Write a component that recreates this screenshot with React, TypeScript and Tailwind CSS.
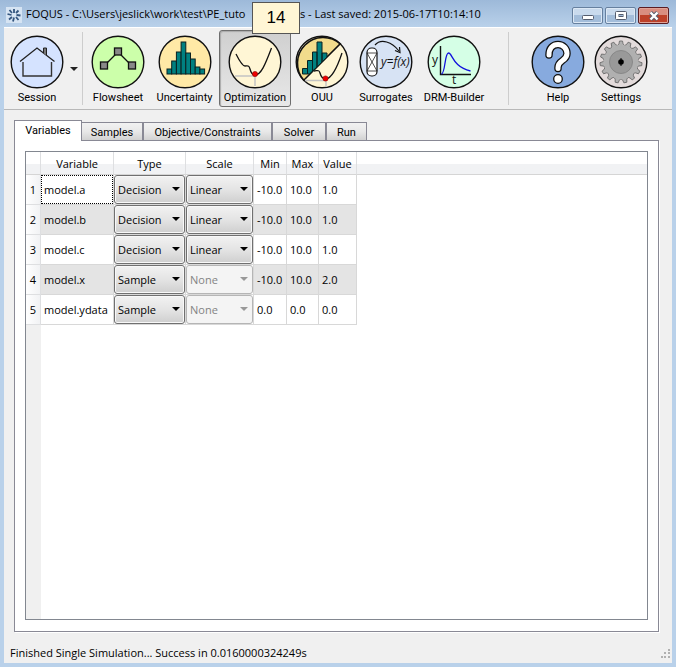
import type { ReactNode } from "react";

const outline = { stroke: "#111", strokeWidth: 1.4 };

function Disc({ fill, children }: { fill: string; children?: ReactNode }) {
  return (
    <svg viewBox="0 0 54 54" className="block h-[54px] w-[54px] shrink-0" fill="none" aria-hidden="true">
      <circle cx="27" cy="27" r="25.8" fill={fill} {...outline} />
      {children}
    </svg>
  );
}

const SessionIcon = () => (
  <Disc fill="#d5e3ff">
    <path d="M10 26.5 27 13l17.500 13.500" stroke="#222" strokeWidth="1.300" />
    <path d="M13 27v14h28.500V27" stroke="#333" strokeWidth="1.400" />
    <path d="M33.500 18v-5h3v7.500" fill="#777" stroke="#222" />
  </Disc>
);

const FlowsheetIcon = () => (
  <Disc fill="#ccffaa">
    <path d="M13 31 27 17l14 14" stroke="#111" strokeWidth="1.300" />
    <g fill="#888" stroke="#111" strokeWidth="1.300">
      <rect x="23.500" y="13" width="7" height="7" />
      <rect x="9.500" y="27" width="7" height="7" />
      <rect x="37.500" y="27" width="7" height="7" />
    </g>
  </Disc>
);

const bars = [
  [9, 5], [13.7, 13], [18.400, 22], [23.100, 32], [27.800, 21], [32.500, 15], [37.200, 7], [41.900, 5],
];

const UncertaintyIcon = () => (
  <Disc fill="#ffe9a6">
    <g fill="#008080" stroke="#0a2020" strokeWidth="1">
      {bars.map(([x, h]) => (
        <rect key={x} x={x} y={39 - h} width="4.700" height={h} />
      ))}
    </g>
  </Disc>
);

const OptimizationIcon = () => (
  <Disc fill="#fff6d5">
    <path d="M7 41h20v10" stroke="#c4c4c4" strokeWidth="1.500" />
    <path d="M8 19c3 6 6 12 9 12s4-1 5 3 2 6 5 6c6 0 10-10 16.500-27" stroke="#111" strokeWidth="1.300" />
    <circle cx="27" cy="39" r="2.600" fill="#e00" stroke="#800" strokeWidth=".6" />
  </Disc>
);

const OuuIcon = () => (
  <Disc fill="#fff6d5">
    <path d="M8.800 45.200A25.800 25.800 0 0 1 45.200 8.800Z" fill="#f2dc8c" stroke="#111" strokeWidth="1.600" />
    <g fill="#008080" stroke="#0a2020" strokeWidth="1">
      <path d="M7.500 33.500h5V39h-5zM12.500 25.500h5V36l-3 3h-2zM17.500 17h4.500v15l-4.500 4zM22 7h5v20l-5 5zM27 18h5v4l-5 5z" />
    </g>
    <path d="M10 45.500h21V52" stroke="#c4c4c4" strokeWidth="1.400" />
    <path d="M19 36c3 0 5-2 6 2s3 6 6 6c7-1 12-14 16-26" stroke="#111" strokeWidth="1.300" />
    <circle cx="30.500" cy="43.500" r="2.600" fill="#e00" stroke="#800" strokeWidth=".6" />
  </Disc>
);

const SurrogatesIcon = () => (
  <Disc fill="#d7e3f4">
    <rect x="8" y="13" width="10" height="28" rx="4.500" fill="#fff" stroke="#111" strokeWidth="1.200" />
    <path d="M8 18h10M8 36h10M8 18l10 18M18 18 8 36" stroke="#222" strokeWidth=".8" />
    <path d="M16 10c6-7 17-3 24 6" stroke="#111" strokeWidth="1.200" />
    <path d="m36 15.500 5 2-.5-5.500" stroke="#111" strokeWidth="1.200" />
    <text x="22" y="31" fontSize="12" fontStyle="italic" fill="#111" fontFamily="Open Sans, sans-serif">y=f(x)</text>
  </Disc>
);

const DrmIcon = () => (
  <Disc fill="#d5ffe6">
    <path d="M13.500 11v28.500H44" stroke="#111" strokeWidth="1.400" />
    <path d="M14.500 39c4-1 3-21 7-21s4 14 22 18" stroke="#1111dd" strokeWidth="1.300" />
    <text x="5" y="29" fontSize="12" fill="#111" fontFamily="Open Sans, sans-serif">y</text>
    <text x="25" y="49" fontSize="12" fill="#111" fontFamily="Open Sans, sans-serif">t</text>
  </Disc>
);

const HelpIcon = () => (
  <Disc fill="#87aade">
    <path d="M18 20c0-7 4-10.500 9-10.500s9 4 9 9c0 8-9 6-9 14v1" stroke="#111" strokeWidth="7.500" strokeLinecap="round" />
    <path d="M18 20c0-7 4-10.500 9-10.500s9 4 9 9c0 8-9 6-9 14v1" stroke="#fff" strokeWidth="5" strokeLinecap="round" />
    <circle cx="27" cy="44" r="4.300" fill="#fff" stroke="#111" strokeWidth="1.300" />
  </Disc>
);

const teeth = [0, 24, 48, 72, 96, 120, 144, 168, 192, 216, 240, 264, 288, 312, 336];

const SettingsIcon = () => (
  <Disc fill="#e3dbdb">
    <g fill="#b0b0b0" stroke="#666" strokeWidth=".8">
      {teeth.map((angle) => (
        <path key={angle} d="M23.500 10.500q1.800-1 2-4.500h3q.2 3.500 2 4.500" transform={`rotate(${angle} 27 27)`} />
      ))}
    </g>
    <circle cx="27" cy="27" r="17" fill="#b0b0b0" />
    <circle cx="27" cy="27" r="11.500" fill="#999" stroke="#888" />
    <circle cx="27" cy="27" r="2.800" fill="#000" />
    <path d="M27 23v8" stroke="#000" />
  </Disc>
);

function Tool({ label, icon, width, active }: { label: string; icon: ReactNode; width: string; active?: boolean }) {
  return (
    <button
      type="button"
      className={`flex h-[77px] shrink-0 flex-col items-center rounded-[3px] border pt-1 font-['Roboto',sans-serif] ${width} ${
        active ? "border-[#6e6e6e] bg-gradient-to-b from-[#cfcfcf] to-[#e8e8e8] shadow-[inset_1px_1px_1px_#aaa]" : "border-transparent"
      }`}
    >
      {icon}
      <span className="whitespace-nowrap pt-px leading-4">{label}</span>
    </button>
  );
}

const Divider = () => <span className="h-[73px] w-px bg-[#cdcdcd]" />;

const DownArrow = ({ className }: { className: string }) => (
  <svg viewBox="0 0 8 4" className={`h-1 w-2 ${className}`} fill="currentColor" aria-hidden="true">
    <path d="M0 0h8L4 4z" />
  </svg>
);

function Choice({ value, options, label, disabled }: { value: string; options: string[]; label: string; disabled?: boolean }) {
  return (
    <span className="relative block">
      <select
        aria-label={label}
        defaultValue={value}
        disabled={disabled}
        className={`block h-[29px] w-full appearance-none rounded-[3px] border pl-[3px] pt-[2px] ${
          disabled
            ? "border-[#b5b5b5] bg-[#f4f4f4] text-[#838383] opacity-100"
            : "border-[#707070] bg-gradient-to-b from-[#f2f2f2] via-[#e4e4e4] to-[#cfcfcf] shadow-[inset_0_0_0_1px_#f8f8f8]"
        }`}
      >
        {options.map((option) => (
          <option key={option}>{option}</option>
        ))}
      </select>
      <DownArrow className={`pointer-events-none absolute right-[5px] top-3 ${disabled ? "text-[#999]" : "text-black"}`} />
    </span>
  );
}

const rows = [
  { name: "model.a", type: "Decision", scale: "Linear", min: "-10.0", max: "10.0", value: "1.0" },
  { name: "model.b", type: "Decision", scale: "Linear", min: "-10.0", max: "10.0", value: "1.0" },
  { name: "model.c", type: "Decision", scale: "Linear", min: "-10.0", max: "10.0", value: "1.0" },
  { name: "model.x", type: "Sample", scale: "None", min: "-10.0", max: "10.0", value: "2.0" },
  { name: "model.ydata", type: "Sample", scale: "None", min: "0.0", max: "0.0", value: "0.0" },
];

const headCell = "h-[23px] border-b border-r border-b-[#d5d5d5] border-r-[#dedfe1] p-0 pt-[2px] text-center font-normal";
const bodyCell = "border-b border-r border-[#d8d8d8] p-0 pl-[3px] pt-[2px]";

function VariablesTable() {
  return (
    <table className="w-full table-fixed border-separate border-spacing-0 whitespace-nowrap">
      <colgroup>
        <col className="w-[15px]" />
        <col className="w-[73px]" />
        <col className="w-[72px]" />
        <col className="w-[68px]" />
        <col className="w-[33px]" />
        <col className="w-[32px]" />
        <col className="w-[38px]" />
        <col />
      </colgroup>
      <thead>
        <tr className="bg-gradient-to-b from-white from-50% to-[#f1f2f4] to-50%">
          <td className={headCell} />
          {["Variable", "Type", "Scale", "Min", "Max", "Value"].map((title) => (
            <th key={title} scope="col" className={headCell}>
              {title}
            </th>
          ))}
          <td className="border-b border-[#d5d5d5] p-0" />
        </tr>
      </thead>
      <tbody>
        {rows.map((row, index) => {
          const shade = index % 2 ? "bg-[#e4e4e4]" : "bg-white";
          return (
            <tr key={row.name} className="h-[30px]">
              <th scope="row" className="border-b border-r border-[#dedfe1] bg-gradient-to-r from-white to-[#f1f2f4] p-0 pt-[2px] font-normal">
                {index + 1}
              </th>
              <td className={`border-b border-r border-[#d8d8d8] p-0 ${shade}`}>
                <div className={`flex h-[29px] items-center border border-dotted pl-[2px] pt-[2px] ${index === 0 ? "border-black" : "border-transparent"}`}>
                  {row.name}
                </div>
              </td>
              <td className="border-b border-r border-[#d8d8d8] p-0">
                <Choice label={`Type of ${row.name}`} value={row.type} options={["Decision", "Sample"]} />
              </td>
              <td className="border-b border-r border-[#d8d8d8] p-0">
                <Choice label={`Scale of ${row.name}`} value={row.scale} options={["Linear", "None"]} disabled={row.scale === "None"} />
              </td>
              <td className={`${bodyCell} ${shade}`}>{row.min}</td>
              <td className={`${bodyCell} ${shade}`}>{row.max}</td>
              <td className={`${bodyCell} ${shade}`}>{row.value}</td>
              <td className="p-0" />
            </tr>
          );
        })}
      </tbody>
    </table>
  );
}

const tab = "-mb-px h-[19px] border border-[#898995] bg-gradient-to-b from-[#f2f2f2] via-[#e8e8e8] to-[#d2d2d2] pt-[2px]";

export default function App() {
  return (
    <div className="flex min-h-screen flex-col bg-[#b9d1ea] bg-gradient-to-b from-[#9db9d9] to-[#b9d1ea] to-[27px] px-1 pb-1 font-['Open_Sans',sans-serif] text-[11px] text-black">
      <header className="flex h-[27px] items-center pl-[2px] pr-[3px] pt-[2px]">
        <svg viewBox="0 0 16 16" className="h-4 w-4 shrink-0" aria-hidden="true">
          <rect width="16" height="16" fill="#d6e4f3" />
          <g stroke="#33557f" strokeWidth="1.800">
            <path d="M8 2v4M12.500 3.500l-2.500 2.500M14.500 8.500l-4-.5M12.500 13l-2.500-3M7 14.500l1-4M3 12.500 6 10M1.500 7l4 1M3.500 3 6 6" />
          </g>
        </svg>
        <h1 className="flex flex-1 items-center whitespace-nowrap pl-1">
          <span className="w-[226px]">FOQUS - C:\Users\jeslick\work\test\PE_tuto</span>
          <span className="z-10 -mb-[7px] flex h-[32px] w-[48px] items-center justify-center border border-[#555] bg-[#fff6d5] font-['Liberation_Sans',sans-serif] text-[17px]">
            14
          </span>
          <span>s - Last saved: 2015-06-17T10:14:10</span>
        </h1>
        <div className="mt-[2px] flex gap-[2px]">
          <button type="button" aria-label="Minimize" className="flex h-[17px] w-[31px] items-center justify-center rounded-[2px] border border-[#66809f] bg-gradient-to-b from-[#c9daed] from-50% to-[#a3bdda] to-50% shadow-[inset_0_0_0_1px_#dce8f5]">
            <svg viewBox="0 0 12 5" className="mt-1 h-[5px] w-3" aria-hidden="true">
              <rect x=".5" y=".5" width="11" height="4" rx="1" fill="#fff" stroke="#555d6e" />
            </svg>
          </button>
          <button type="button" aria-label="Maximize" className="flex h-[17px] w-[31px] items-center justify-center rounded-[2px] border border-[#66809f] bg-gradient-to-b from-[#c9daed] from-50% to-[#a3bdda] to-50% shadow-[inset_0_0_0_1px_#dce8f5]">
            <svg viewBox="0 0 12 9" className="h-[9px] w-3" aria-hidden="true">
              <rect x=".5" y=".5" width="11" height="8" rx="1" fill="#fff" stroke="#555d6e" />
              <rect x="4" y="3.500" width="4" height="2" fill="#a3bdda" stroke="#555d6e" />
            </svg>
          </button>
          <button type="button" aria-label="Close" className="flex h-[17px] w-[31px] items-center justify-center rounded-[2px] border border-[#5b1c22] bg-gradient-to-b from-[#d98d80] from-45% to-[#bd4029] to-50% shadow-[inset_0_0_0_1px_#e0a397]">
            <svg viewBox="0 0 12 10" className="h-[10px] w-3" aria-hidden="true">
              <path d="m2.500 1.500 7 7m0-7-7 7" stroke="#555d6e" strokeWidth="4.200" />
              <path d="m2.500 1.500 7 7m0-7-7 7" stroke="#fff" strokeWidth="2.400" />
            </svg>
          </button>
        </div>
      </header>

      <div className="flex flex-1 flex-col bg-[#f0f0f0]">
        <nav className="flex h-[83px] items-center border-b border-t border-b-[#b8b8b8] border-t-white pl-px" aria-label="Main">
          <Tool label="Session" width="w-[64px]" icon={<SessionIcon />} />
          <button type="button" aria-label="Session menu" className="flex h-[77px] w-[13px] items-center pl-px">
            <DownArrow className="text-[#222]" />
          </button>
          <Divider />
          <div className="flex pl-[3px]">
            <Tool label="Flowsheet" width="w-[64px]" icon={<FlowsheetIcon />} />
            <Tool label="Uncertainty" width="w-[69px]" icon={<UncertaintyIcon />} />
            <Tool label="Optimization" width="w-[72px]" icon={<OptimizationIcon />} active />
            <Tool label="OUU" width="w-[62px]" icon={<OuuIcon />} />
            <Tool label="Surrogates" width="w-[66px]" icon={<SurrogatesIcon />} />
            <Tool label="DRM-Builder" width="w-[70px]" icon={<DrmIcon />} />
          </div>
          <div className="flex flex-1 items-center justify-end gap-[18px] pr-[19px]">
            <Divider />
            <div className="flex">
              <Tool label="Help" width="w-[62px]" icon={<HelpIcon />} />
              <Tool label="Settings" width="w-[64px]" icon={<SettingsIcon />} />
            </div>
          </div>
        </nav>

        <main className="flex flex-1 flex-col pl-[10px] pr-[13px] pt-[10px]">
          <div className="flex items-end font-['Roboto',sans-serif]" role="tablist">
            <button type="button" role="tab" aria-selected="true" className="z-10 -mb-px h-[21px] w-[68px] border border-b-0 border-[#898995] bg-white pt-px">
              Variables
            </button>
            <button type="button" role="tab" aria-selected="false" className={`${tab} w-[61px] border-l-0`}>Samples</button>
            <button type="button" role="tab" aria-selected="false" className={`${tab} w-[129px]`}>Objective/Constraints</button>
            <button type="button" role="tab" aria-selected="false" className={`${tab} w-[54px]`}>Solver</button>
            <button type="button" role="tab" aria-selected="false" className={`${tab} w-[41px]`}>Run</button>
          </div>
          <section className="flex flex-1 flex-col border border-[#898995] bg-white px-[10px] pb-[11px] pt-[10px] shadow-[1px_1px_0_#fff]" role="tabpanel">
            <div className="flex flex-1 flex-col border border-[#828790]">
              <VariablesTable />
              <div className="w-[15px] flex-1 bg-[#f0f0f0]" />
            </div>
          </section>
        </main>

        <footer className="flex h-[31px] items-center justify-between pl-[6px] pr-[2px] pt-3">
          <span className="whitespace-nowrap">Finished Single Simulation... Success in 0.0160000324249s</span>
          <svg viewBox="0 0 9 9" className="h-[9px] w-[9px]" fill="#b0b0b0" aria-hidden="true">
            <path d="M7 0h2v2H7zM3 3h2v2H3zM7 3h2v2H7zM0 7h2v2H0zM3 7h2v2H3zM7 7h2v2H7z" />
          </svg>
        </footer>
      </div>
    </div>
  );
}
